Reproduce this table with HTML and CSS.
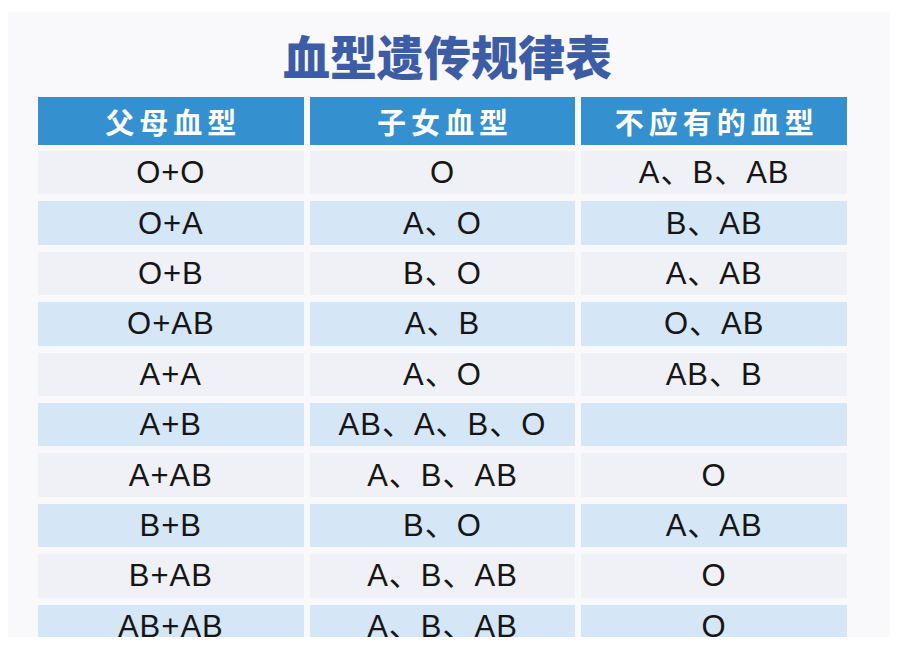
FILE: index.html
```html
<!DOCTYPE html>
<html lang="zh">
<head>
<meta charset="utf-8">
<title>血型遗传规律表</title>
<link rel="stylesheet" href="styles.css">
</head>
<body>
<div class="panel">
  <h1 class="title">血型遗传规律表</h1>
  <div class="table">
    <div class="cell head">父母血型</div>
    <div class="cell head">子女血型</div>
    <div class="cell head">不应有的血型</div>

    <div class="cell odd">O+O</div><div class="cell odd">O</div><div class="cell odd">A、B、AB</div>
    <div class="cell even">O+A</div><div class="cell even">A、O</div><div class="cell even">B、AB</div>
    <div class="cell odd">O+B</div><div class="cell odd">B、O</div><div class="cell odd">A、AB</div>
    <div class="cell even">O+AB</div><div class="cell even">A、B</div><div class="cell even">O、AB</div>
    <div class="cell odd">A+A</div><div class="cell odd">A、O</div><div class="cell odd">AB、B</div>
    <div class="cell even">A+B</div><div class="cell even">AB、A、B、O</div><div class="cell even"></div>
    <div class="cell odd">A+AB</div><div class="cell odd">A、B、AB</div><div class="cell odd">O</div>
    <div class="cell even">B+B</div><div class="cell even">B、O</div><div class="cell even">A、AB</div>
    <div class="cell odd">B+AB</div><div class="cell odd">A、B、AB</div><div class="cell odd">O</div>
    <div class="cell even">AB+AB</div><div class="cell even">A、B、AB</div><div class="cell even">O</div>
  </div>
</div>
</body>
</html>
```

FILE: styles.css
```css
html, body {
  margin: 0;
  padding: 0;
  background: #ffffff;
}

.panel {
  margin: 12px 10px 0 8px;
  height: 625px;
  overflow: hidden;
  background: #f9f9fc;
  padding: 0 35px 0 30px;
}

.title {
  margin: 0;
  padding-top: 15px;
  padding-left: 2px;
  height: 85px;
  box-sizing: border-box;
  line-height: 56px;
  text-align: center;
  font-family: "Noto Sans CJK SC", sans-serif;
  font-weight: 900;
  font-size: 47px;
  color: #3d5ca6;
}

.table {
  width: 809px;
  display: grid;
  grid-template-columns: repeat(3, 1fr);
  grid-template-rows: 47px;
  grid-auto-rows: 43.4px;
  column-gap: 6px;
  row-gap: 7px;
}

.table .head:nth-child(-n+3) {
  margin-bottom: -1px;
}

.cell {
  display: flex;
  align-items: center;
  justify-content: center;
  font-family: "Liberation Sans", "Noto Sans CJK SC", sans-serif;
  font-size: 31px;
  line-height: 1;
  letter-spacing: 1px;
  color: #161616;
  white-space: nowrap;
  overflow: hidden;
}

.head {
  background: #3590cf;
  color: #ffffff;
  font-family: "Noto Sans CJK SC", sans-serif;
  font-weight: 700;
  font-size: 29px;
  letter-spacing: 5px;
  text-indent: 5px;
}

.odd {
  background: #f0f1f6;
}

.even {
  background: #d5e6f7;
}
```
